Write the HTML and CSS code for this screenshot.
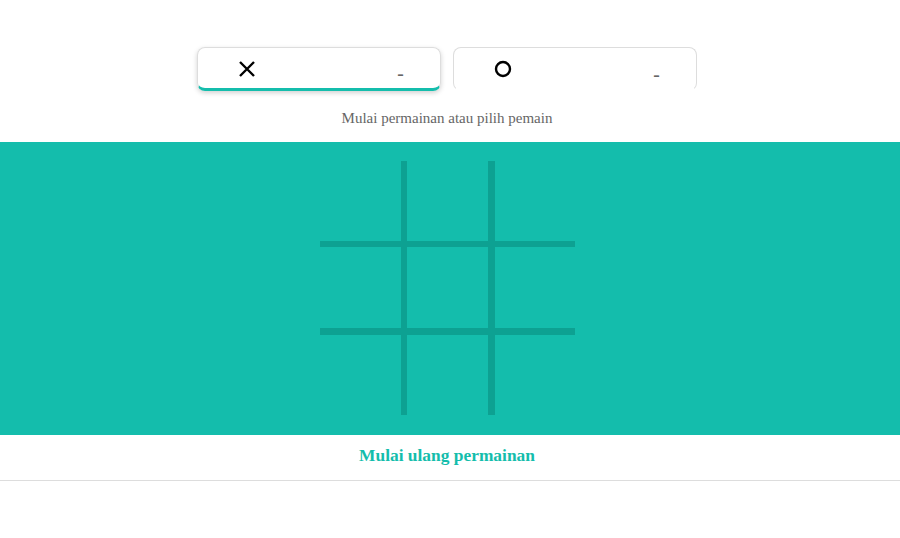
FILE: index.html
```html
<!DOCTYPE html>
<html>
<head>
<meta charset="utf-8">
<link rel="stylesheet" href="styles.css">
</head>
<body>
<div class="players">
  <div class="card active">
    <svg class="icon" width="18" height="18" viewBox="0 0 18 18"><path d="M2 2 L16 16 M16 2 L2 16" stroke="#000" stroke-width="2.4" fill="none"/></svg>
    <span class="score">-</span>
  </div>
  <div class="card">
    <svg class="icon" width="18" height="18" viewBox="0 0 18 18"><circle cx="9" cy="9" r="7" stroke="#000" stroke-width="2.4" fill="none"/></svg>
    <span class="score">-</span>
  </div>
</div>
<p class="hint">Mulai permainan atau pilih pemain</p>
<div class="board-wrap">
  <div class="board">
    <div class="cell"></div><div class="cell"></div><div class="cell"></div>
    <div class="cell"></div><div class="cell"></div><div class="cell"></div>
    <div class="cell"></div><div class="cell"></div><div class="cell"></div>
  </div>
</div>
<div class="restart">Mulai ulang permainan</div>
</body>
</html>
```
FILE: styles.css
```css
html, body { margin: 0; padding: 0; background: #fff; }
body { width: 900px; height: 538px; overflow: hidden; font-family: "Liberation Serif", serif; }
.players {
  display: flex; justify-content: center; gap: 12px;
  padding: 47px 6px 0 0;
}
.card {
  box-sizing: border-box;
  width: 244px; height: 44px;
  border: 1px solid #ddd;
  border-bottom-color: transparent;
  border-radius: 8px;
  display: flex; align-items: center;
  position: relative;
}
.card.active {
  border-bottom: 3px solid #14bdac;
  box-shadow: 0 2px 5px rgba(0,0,0,0.18);
}
.icon { margin-left: 40px; margin-top: 2px; }
.card + .card .icon { margin-top: 0; }
.score {
  margin-left: auto; margin-right: 36px;
  font-family: "Liberation Sans", sans-serif;
  color: #666; font-size: 21px; margin-top: 12px;
  line-height: 20px;
}
.hint {
  margin: 0; padding-top: 17px; height: 34px; box-sizing: border-box;
  text-align: center; padding-right: 6px;
  font-size: 15px; color: #666; line-height: 20px;
}
.board-wrap {
  margin-top: 17px;
  background: #14bdac;
  height: 293px;
  display: flex; justify-content: center;
  padding: 19px 6px 0 0; box-sizing: border-box;
}
.board {
  width: 255px; height: 254px;
  display: grid;
  grid-template-columns: 81px 6px 81px 6px 81px;
  grid-template-rows: 80px 7px 80px 7px 80px;
  background:
    linear-gradient(#0da192,#0da192) 81px 0/6px 100% no-repeat,
    linear-gradient(#0da192,#0da192) 168px 0/7px 100% no-repeat,
    linear-gradient(#0da192,#0da192) 0 80px/100% 6px no-repeat,
    linear-gradient(#0da192,#0da192) 0 167px/100% 7px no-repeat;
}
.restart {
  height: 46px; box-sizing: border-box;
  border-bottom: 1px solid #ddd;
  text-align: center; padding-right: 6px;
  font-weight: bold; font-size: 17.4px; color: #14bdac;
  line-height: 41px;
}
```
